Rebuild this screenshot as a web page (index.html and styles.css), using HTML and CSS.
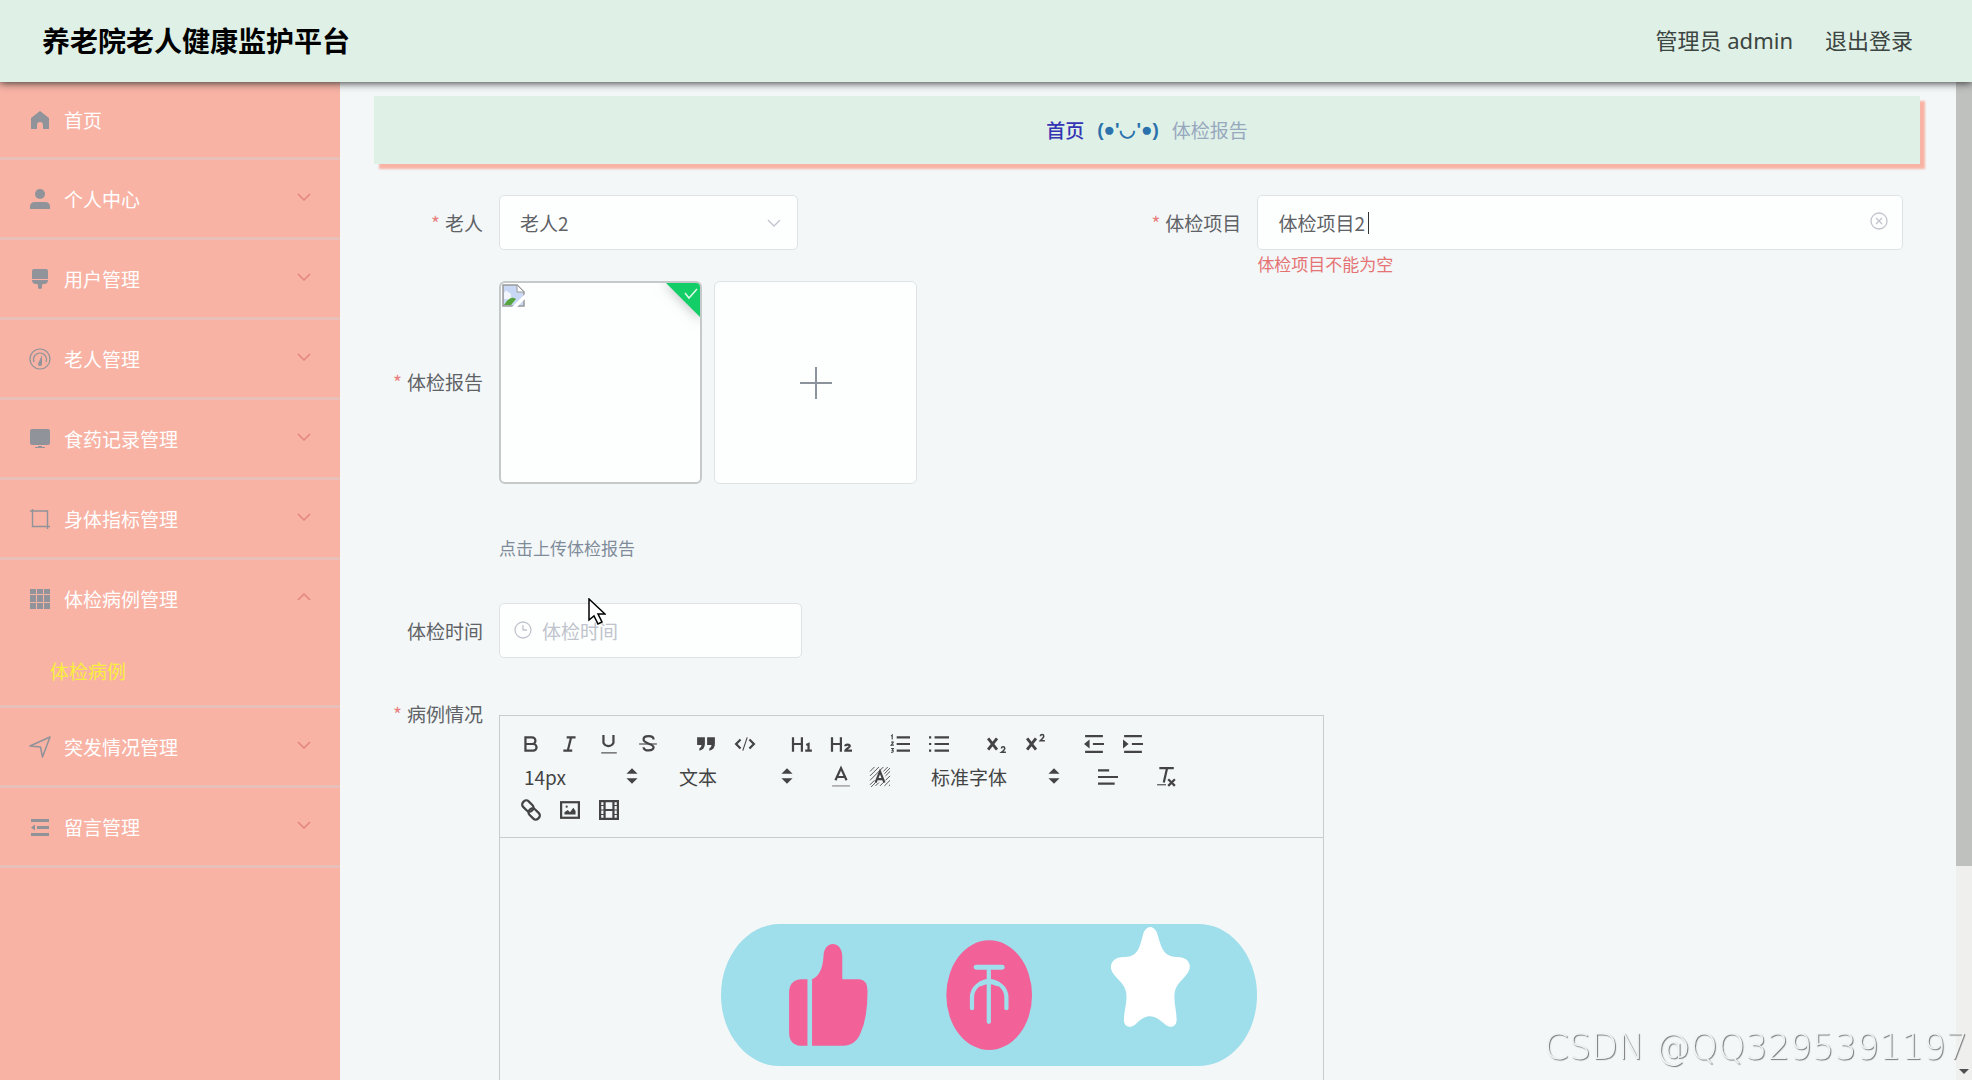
FILE: index.html
```html
<!DOCTYPE html>
<html lang="zh-CN">
<head>
<meta charset="utf-8">
<title>养老院老人健康监护平台</title>
<link rel="stylesheet" href="styles.css">
</head>
<body>
<header class="topbar">
  <h1 class="brand">养老院老人健康监护平台</h1>
  <div class="account">
    <span>管理员 admin</span>
    <a href="#logout">退出登录</a>
  </div>
</header>

<div class="shell">
  <nav class="sidebar">
    <ul class="menu">
      <li class="menu-group first"><a class="menu-item" href="#home">
        <svg class="menu-icon" viewBox="0 0 20 20"><path d="M10 1 19 8v11h-6v-4a3 3 0 0 0-6 0v4H1V8z" fill="currentColor"/></svg>
        <span>首页</span></a></li>
      <li class="menu-group"><button class="menu-item" type="button">
        <svg class="menu-icon" viewBox="0 0 20 20" fill="currentColor"><circle cx="10" cy="5" r="5"/><path d="M0 20v-2q0-5 5-5h10q5 0 5 5v2z"/></svg>
        <span>个人中心</span><svg class="arrow" viewBox="0 0 14 8"><path d="M1 1l6 6 6-6"/></svg></button></li>
      <li class="menu-group"><button class="menu-item" type="button">
        <svg class="menu-icon" viewBox="0 0 20 20" fill="currentColor"><path d="M2 2Q2 0 4 0h12q2 0 2 2v8H2zM2 11h16q0 4-4 4h-1l-1 1v3q-2 2-4 0v-3l-1-1H6q-4 0-4-4z"/></svg>
        <span>用户管理</span><svg class="arrow" viewBox="0 0 14 8"><path d="M1 1l6 6 6-6"/></svg></button></li>
      <li class="menu-group"><button class="menu-item" type="button">
        <svg class="menu-icon" viewBox="0 0 20 20" fill="none" stroke="currentColor" stroke-width="1.2"><circle cx="10" cy="10" r="10"/><path d="M4 13a6.500 6.500 0 1 1 12 0"/><path d="M8 15l4-9v9a2 2 0 0 1-4 0z" fill="currentColor" stroke="none"/></svg>
        <span>老人管理</span><svg class="arrow" viewBox="0 0 14 8"><path d="M1 1l6 6 6-6"/></svg></button></li>
      <li class="menu-group"><button class="menu-item" type="button">
        <svg class="menu-icon" viewBox="0 0 20 20" fill="currentColor"><rect y="0" width="20" height="16" rx="2"/><path d="M8 17h4v1h3v1H5v-1h3z"/></svg>
        <span>食药记录管理</span><svg class="arrow" viewBox="0 0 14 8"><path d="M1 1l6 6 6-6"/></svg></button></li>
      <li class="menu-group"><button class="menu-item" type="button">
        <svg class="menu-icon" viewBox="0 0 20 20" fill="none" stroke="currentColor" stroke-width="1.4"><path d="M0 2h17.500v18M2.500 0v17.500H20"/></svg>
        <span>身体指标管理</span><svg class="arrow" viewBox="0 0 14 8"><path d="M1 1l6 6 6-6"/></svg></button></li>
      <li class="menu-group"><button class="menu-item" type="button" aria-expanded="true">
        <svg class="menu-icon" viewBox="0 0 20 20" fill="currentColor"><path d="M0 0h6v5H0zM7 0h6v5H7zM14 0h6v5h-6zM0 6h6v7H0zM7 6h6v7H7zM14 6h6v7h-6zM0 14h6v6H0zM7 14h6v6H7zM14 14h6v6h-6z"/></svg>
        <span>体检病例管理</span><svg class="arrow" viewBox="0 0 14 8"><path d="M1 7l6-6 6 6"/></svg></button>
        <a class="submenu-item" href="#case">体检病例</a></li>
      <li class="menu-group"><button class="menu-item" type="button">
        <svg class="menu-icon" viewBox="0 0 20 20" fill="none" stroke="currentColor" stroke-width="1.5" stroke-linejoin="round"><path d="M0 9 20 0 12.500 20 10.500 10z"/></svg>
        <span>突发情况管理</span><svg class="arrow" viewBox="0 0 14 8"><path d="M1 1l6 6 6-6"/></svg></button></li>
      <li class="menu-group"><button class="menu-item" type="button">
        <svg class="menu-icon" viewBox="0 0 20 20" fill="currentColor"><path d="M1 2h18v3H1zM7 9h12v3H7zM1 16h18v3H1zM1 10.500l4-3v6z"/></svg>
        <span>留言管理</span><svg class="arrow" viewBox="0 0 14 8"><path d="M1 1l6 6 6-6"/></svg></button></li>
    </ul>
  </nav>

  <main class="content">
    <div class="crumbs">
      <a href="#home">首页</a><span class="crumb-face">(●'◡'●)</span><span class="crumb-here">体检报告</span>
    </div>

    <form class="form">
      <div class="row two">
        <div class="field">
          <label class="label required" for="elder">老人</label>
          <div class="control select-box">
            <select id="elder" class="box"><option>老人2</option></select>
            <svg class="select-arrow" viewBox="0 0 14 8"><path d="M1 1l6 6 6-6"/></svg>
          </div>
        </div>
        <div class="field">
          <label class="label required" for="item">体检项目</label>
          <div class="control grow">
            <input id="item" class="box" type="text" value="体检项目2">
            <i class="caret"></i>
            <svg class="clear" viewBox="0 0 18 18"><circle cx="9" cy="9" r="8"/><path d="M6 6l6 6M12 6l-6 6"/></svg>
            <p class="error">体检项目不能为空</p>
          </div>
        </div>
      </div>

      <div class="row field report-row">
        <label class="label required tall" for="report">体检报告</label>
        <div>
          <div class="uploads">
            <div class="thumb">
              <svg class="broken" viewBox="0 0 23 23"><path d="M1 1h14l7 7v14H1z" fill="#c9d8f4" stroke="#999" stroke-width="1.500"/><path d="M15 1v7h7z" fill="#fff" stroke="#999"/><path d="M2 9q2-4 4-1l3 2v5H2z" fill="#f2f6fd"/><path d="M2 21q6-10 12-6l-5 6z" fill="#55a53c"/><path d="M10 23 23 10v5l-8 8z" fill="#fff"/></svg>
              <svg class="done" viewBox="0 0 70 70"><path class="done-corner" d="M32 0h38v38z" fill="#13ce66"/><path d="M53 12l4 5 8-9" fill="none" stroke="#dff8e9" stroke-width="1.500"/></svg>
            </div>
            <button id="report" class="add" type="button" aria-label="点击上传体检报告"><svg viewBox="0 0 32 32"><path d="M16 0v32M0 16h32"/></svg></button>
          </div>
          <p class="tip">点击上传体检报告</p>
        </div>
      </div>

      <div class="row field time-row">
        <label class="label" for="time">体检时间</label>
        <div class="control date-box">
          <svg class="clock" viewBox="0 0 18 18"><circle cx="9" cy="9" r="8"/><path d="M9 4v5h4"/></svg>
          <input id="time" class="box" type="text" placeholder="体检时间">
        </div>
      </div>

      <div class="row field">
        <label class="label required" for="editor">病例情况</label>
        <div class="editor">
          <div class="toolbar">
            <div class="tools">
              <div class="group">
                <button type="button" aria-label="粗体"><svg viewBox="0 0 18 18"><path d="M4 3h6a3 3 0 0 1 0 6H4zM4 9h7a3 3 0 0 1 0 6H4z"/></svg></button>
                <button type="button" aria-label="斜体"><svg viewBox="0 0 18 18"><path d="M6 3h8M3 15h8M7 15l3-12"/></svg></button>
                <button type="button" aria-label="下划线"><svg viewBox="0 0 18 18"><path d="M4 1v7a5 5 0 0 0 9 0V1"/><path class="thin" d="M2 17h14"/></svg></button>
                <button type="button" aria-label="删除线"><svg viewBox="0 0 18 18"><path class="thin" d="M1 9h16"/><path d="M14 5c0-4-9-4-9 0C5 9 14 8.500 14 12s-9 4-9 0"/></svg></button>
              </div>
              <div class="group">
                <button type="button" aria-label="引用"><svg viewBox="0 0 18 18"><path class="solid" d="M1 3h7v6q0 5-5 6v-2q2-1 2-3H1zM10 3h7v6q0 5-5 6v-2q2-1 2-3h-4z"/></svg></button>
                <button type="button" aria-label="代码"><svg viewBox="0 0 18 18"><path d="M5 5 1 9l4 4M13 5l4 4-4 4"/><path class="thin" d="M11 3 7 15"/></svg></button>
              </div>
              <div class="group">
                <button type="button" aria-label="标题 1"><svg viewBox="0 0 18 18"><path d="M0 3v13M8 3v13M0 9h8M12 10l2-1v6M11 15h6"/></svg></button>
                <button type="button" aria-label="标题 2"><svg viewBox="0 0 18 18"><path d="M0 3v13M8 3v13M0 9h8M12 11c0-2 4-2 4 0 0 1-4 3-4 4h6"/></svg></button>
              </div>
              <div class="group">
                <button type="button" aria-label="有序列表"><svg viewBox="0 0 18 18"><path d="M6 3h12M6 9h12M6 15h12"/><path class="thin" d="M1 2l1-1v4M1 7.500q2-1 2 0L1 10h2.500M1 13h2l-1 1.500q1 0 1 1t-2 1"/></svg></button>
                <button type="button" aria-label="无序列表"><svg viewBox="0 0 18 18"><path d="M5 3h13M5 9h13M5 15h13M0 3h2M0 9h2M0 15h2"/></svg></button>
              </div>
              <div class="group">
                <button type="button" aria-label="下标"><svg viewBox="0 0 18 18"><path class="heavy" d="M1 4l8 10M9 4l-8 10"/><path class="mid" d="M13 13q0-1.500 1.500-1.500T16 13q0 1-3 3.500h4"/></svg></button>
                <button type="button" aria-label="上标"><svg viewBox="0 0 18 18"><path class="heavy" d="M1 4l8 10M9 4l-8 10"/><path class="mid" d="M13 2q0-1.500 1.500-1.500T16 2q0 1-3 4h4"/></svg></button>
              </div>
              <div class="group">
                <button type="button" aria-label="减少缩进"><svg viewBox="0 0 18 18"><path d="M1 2h16M8 9h10M1 16h16"/><path class="solid" d="M5 5v8L0 9z"/></svg></button>
                <button type="button" aria-label="增加缩进"><svg viewBox="0 0 18 18"><path d="M1 2h16M8 9h10M1 16h16"/><path class="solid" d="M0 5v8l5-4z"/></svg></button>
              </div>
            </div>
            <div class="tools">
              <div class="picker"><select aria-label="字号"><option>14px</option></select><svg viewBox="0 0 18 18"><path class="solid" d="M4 7l5-5 5 5zM4 11l5 5 5-5z"/></svg></div>
              <div class="picker"><select aria-label="标题"><option>文本</option></select><svg viewBox="0 0 18 18"><path class="solid" d="M4 7l5-5 5 5zM4 11l5 5 5-5z"/></svg></div>
              <div class="group">
                <button type="button" aria-label="文字颜色"><svg viewBox="0 0 18 18"><path d="M4 12 9 1l5 11M6 9h6"/><path class="pale" d="M1 17h16"/></svg></button>
                <button type="button" aria-label="背景颜色"><svg viewBox="0 0 18 18"><path class="hatch" d="M0 4l4-4M0 8l8-8M0 12 12 0M0 16l4-4M12 4l4-4M1 18l4-4M13 6l5-5M14 8l4-4M5 17l3-3M14 12l4-4M9 17l3-3M13 17l5-5M17 17l1-1"/><path d="M5 14 9 4l4 10M6 11h6"/></svg></button>
              </div>
              <div class="picker wide"><select aria-label="字体"><option>标准字体</option></select><svg viewBox="0 0 18 18"><path class="solid" d="M4 7l5-5 5 5zM4 11l5 5 5-5z"/></svg></div>
              <div class="group"><button type="button" aria-label="对齐"><svg viewBox="0 0 18 18"><path d="M0 3h10M0 9h18M0 15h15"/></svg></button></div>
              <div class="group"><button type="button" aria-label="清除格式"><svg viewBox="0 0 18 18"><path d="M3 1h13M10 1 7 14M11 11l6 6M17 11l-6 6"/><path class="thin" d="M1 16h8"/></svg></button></div>
            </div>
            <div class="tools">
              <div class="group">
                <button type="button" aria-label="链接"><svg viewBox="0 0 18 18"><g transform="rotate(45 9 9)"><rect x="-1" y="5" width="11" height="7" rx="3"/><rect x="8" y="6" width="11" height="7" rx="3"/></g></svg></button>
                <button type="button" aria-label="图片"><svg viewBox="0 0 18 18"><rect x="1" y="2" width="16" height="14"/><path class="solid" d="M4 13v-2l3-2 2 2 3-4 2 3v3z"/><circle class="solid" cx="6" cy="6" r="1"/></svg></button>
                <button type="button" aria-label="视频"><svg viewBox="0 0 18 18"><path d="M1 1h16v16H1zM5 1v16M13 1v16M5 9h8"/><path class="thin" d="M1 5h4M1 9h4M1 13h4M13 5h4M13 9h4M13 13h4"/></svg></button>
              </div>
            </div>
          </div>
          <div id="editor" class="editor-body" contenteditable="true" role="textbox" aria-label="病例情况"></div>
        </div>
      </div>
    </form>
  </main>

  <div class="scrollbar"><div class="scroll-thumb"></div><div class="scroll-down"></div></div>
</div>

<svg class="reactions" viewBox="55 71 1401 427" preserveAspectRatio="none">
  <path d="M209 71H1303C1388 71 1456 167 1456 285S1388 498 1303 498H209C124 498 55 403 55 285S124 71 209 71z" fill="#9fdeeb"/>
  <g fill="#f26299">
    <path d="M281 237v200h-18q-30-3-30-40V277q0-36 30-40z"/>
    <path d="M293 237q27-12 30-70c1-48 48-48 49 0v70h45q21 2 21 36 0 80-18 125-12 38-46 39h-81z"/>
    <ellipse cx="756" cy="285" rx="112" ry="165"/>
  </g>
  <path d="M723 201h66M755 201v165M711 325v-32c0-65 90-65 90 0v32" fill="none" stroke="#9fdeeb" stroke-width="11" stroke-linecap="round"/>
  <path d="M723 201h66M735 250q20-13 42 0" fill="none" stroke="#9fdeeb" stroke-width="15" stroke-linecap="round"/>
  <path d="M1160 95q17-30 34 0c12 45 15 72 50 75 35-2 44 27 30 50-17 26-34 35-34 70 0 25 6 45 6 70-1 22-16 25-30 13-30-30-47-35-78 0-14 12-29 9-30-13 0-25 7-45 7-70 0-35-18-44-35-70-14-23-3-52 31-50 36-1 38-30 49-75z" fill="#fff"/>
</svg>
<svg class="pointer" viewBox="0 0 18 27"><path d="M1 1v21l5-4 4 8 4-2-4-8h7z" fill="#fff" stroke="#000" stroke-width="1.500"/></svg>
<div class="watermark">CSDN @QQ3295391197</div>
</body>
</html>
```

FILE: styles.css
```css
* { box-sizing: border-box; }
body {
  margin: 0;
  height: 100vh;
  display: flex;
  flex-direction: column;
  overflow: hidden;
  background: #f3f7f8;
  color: #606266;
  font-family: "Noto Sans CJK SC", "Noto Sans", sans-serif;
  font-size: 19px;
  line-height: 28px;
}
a { color: inherit; text-decoration: none; }
p, ul { margin: 0; padding: 0; list-style: none; }
button, input, select { font: inherit; color: inherit; }
button { padding: 0; border: 0; background: none; }

.topbar {
  position: relative;
  z-index: 1;
  flex: none;
  display: flex;
  align-items: center;
  justify-content: space-between;
  height: 82px;
  padding: 0 59px 2px 42px;
  background: #dff0e7;
  box-shadow: 0 1px 8px #333;
}
.brand { margin: 0; color: #000; font-size: 28px; font-weight: 700; }
.account {
  display: flex;
  gap: 32px;
  color: #3c4541;
  font-family: "Noto Sans", "Noto Sans CJK SC", sans-serif;
  font-size: 22px;
}

.shell { flex: 1; min-height: 0; display: flex; }

.sidebar { flex: none; width: 340px; background: #f8b3a5; }
.menu-group { border-bottom: 3px solid #e9c0b9; }
.menu-item {
  display: flex;
  align-items: center;
  gap: 14px;
  width: 100%;
  height: 77px;
  padding: 0 29px 0 30px;
  color: #fff;
  text-align: left;
}
.first .menu-item { height: 75px; }
.menu-icon { width: 20px; height: 20px; color: #909399; overflow: visible; }
.menu-item .arrow { margin: 0 0 4px auto; }
.arrow { width: 14px; height: 8px; fill: none; stroke: #e28580; stroke-width: 1.5; }
.submenu-item { display: block; padding: 20px 50px; color: #f9ee3e; }

.content { flex: 1; min-width: 0; padding: 14px 36px 0 34px; overflow: hidden; }
.crumbs {
  display: flex;
  align-items: center;
  justify-content: center;
  gap: 13px;
  height: 68px;
  background: #dff0e7;
  box-shadow: 5px 5px 2px #f8b3a5;
}
.crumbs a { color: #3434b4; font-weight: 500; }
.crumb-face {
  color: #2b72ac;
  font-family: "Liberation Sans", "Noto Sans CJK SC", sans-serif;
  font-weight: 700;
}
.crumb-here { color: #97a8be; }

.form { padding: 31px 17px 0 0; }
.row { margin-bottom: 31px; }
.two { display: grid; grid-template-columns: 49.6% 1fr; height: 55px; }
.field { display: flex; align-items: flex-start; }
.label { flex: none; width: 125px; padding-right: 16px; line-height: 55px; text-align: right; }
.required::before { content: "*"; margin-right: 5px; color: #e98080; }
.tall { line-height: 202px; }
.control { position: relative; }
.grow { flex: 1; }
.box {
  display: block;
  width: 100%;
  height: 55px;
  padding: 0 20px;
  border: 1px solid #dfe3e6;
  border-radius: 5px;
  outline: 0;
  background: #fdffff;
  appearance: none;
}
.box::placeholder { color: #c0c4cc; opacity: 1; }
.select-box { width: 299px; }
.date-box { width: 303px; }
.date-box .box { padding-left: 42px; }
.select-arrow, .clear, .clock { position: absolute; fill: none; stroke: #c0c4cc; stroke-width: 1.3; }
.select-arrow { right: 17px; top: 24px; width: 14px; height: 8px; }
.clear { right: 15px; top: 17px; width: 18px; height: 18px; }
.clock { left: 15px; top: 18px; width: 18px; height: 18px; }
.caret { position: absolute; left: 111px; top: 17px; width: 1px; height: 22px; background: #333; }
.error { color: #e57373; font-size: 17px; line-height: 28px; }

.uploads { display: flex; gap: 12px; }
.thumb, .add { width: 203px; height: 203px; border-radius: 6px; background: #fdffff; }
.thumb { position: relative; overflow: hidden; border: 2px solid #c5c9ca; }
.broken { position: absolute; left: 1px; top: 1px; width: 23px; height: 23px; }
.done { position: absolute; right: -2px; top: -2px; width: 70px; height: 70px; }
.done-corner { filter: drop-shadow(0 2px 6px #9999); }
.add { display: grid; place-items: center; border: 1px solid #dfe3e6; }
.add svg { width: 32px; height: 32px; stroke: #8c939d; stroke-width: 2; }
.tip { margin: 52px 0 43px; color: #7f8b99; font-size: 17px; line-height: 24px; }
.report-row { margin-bottom: 0; }
.time-row { margin-bottom: 28px; }

.editor { width: 825px; margin-top: 29px; border: 1px solid #c8cccd; }
.toolbar { padding: 11px; border-bottom: 1px solid #c8cccd; }
.tools { display: flex; gap: 19px; height: 33px; }
.group { display: flex; }
.group button { display: grid; place-items: center; width: 39px; height: 33px; }
.toolbar svg { width: 20px; height: 20px; fill: none; stroke: #444; stroke-width: 2; overflow: visible; }
.toolbar .thin { stroke-width: 1; }
.toolbar .mid { stroke-width: 1.4; }
.toolbar .heavy { stroke-width: 2.6; }
.toolbar .solid { fill: #444; stroke: none; }
.toolbar .pale { stroke: #aaa; stroke-width: 1.5; }
.toolbar .hatch { stroke-width: .8; }
.picker { position: relative; width: 136px; }
.wide { width: 151px; }
.picker select {
  width: 100%;
  height: 33px;
  padding: 0 13px;
  border: 0;
  background: none;
  color: #444;
  appearance: none;
}
.picker .solid { pointer-events: none; }
.picker svg { position: absolute; right: 5px; top: 6px; width: 20px; height: 20px; pointer-events: none; }
.editor-body { min-height: 400px; }

.scrollbar {
  flex: none;
  display: flex;
  flex-direction: column;
  justify-content: space-between;
  align-items: center;
  width: 16px;
  padding-bottom: 6px;
  background: #eff0ee;
}
.scroll-thumb { width: 100%; height: 79%; background: #bfc1bf; }
.scroll-down { border: 5px solid transparent; border-top-color: #505050; border-bottom: 0; }

.reactions { position: fixed; left: 721px; bottom: 14px; width: 536px; height: 142px; }
.pointer { position: fixed; left: 588px; top: 598px; width: 18px; height: 27px; }
.watermark {
  position: fixed;
  right: 4px;
  bottom: 11px;
  color: #f1f4f4;
  font-family: "DejaVu Sans Light", "DejaVu Sans", sans-serif;
  font-size: 35px;
  font-weight: 200;
  line-height: 44px;
  text-shadow: 1px 1px 1px #777;
  white-space: nowrap;
}
```
